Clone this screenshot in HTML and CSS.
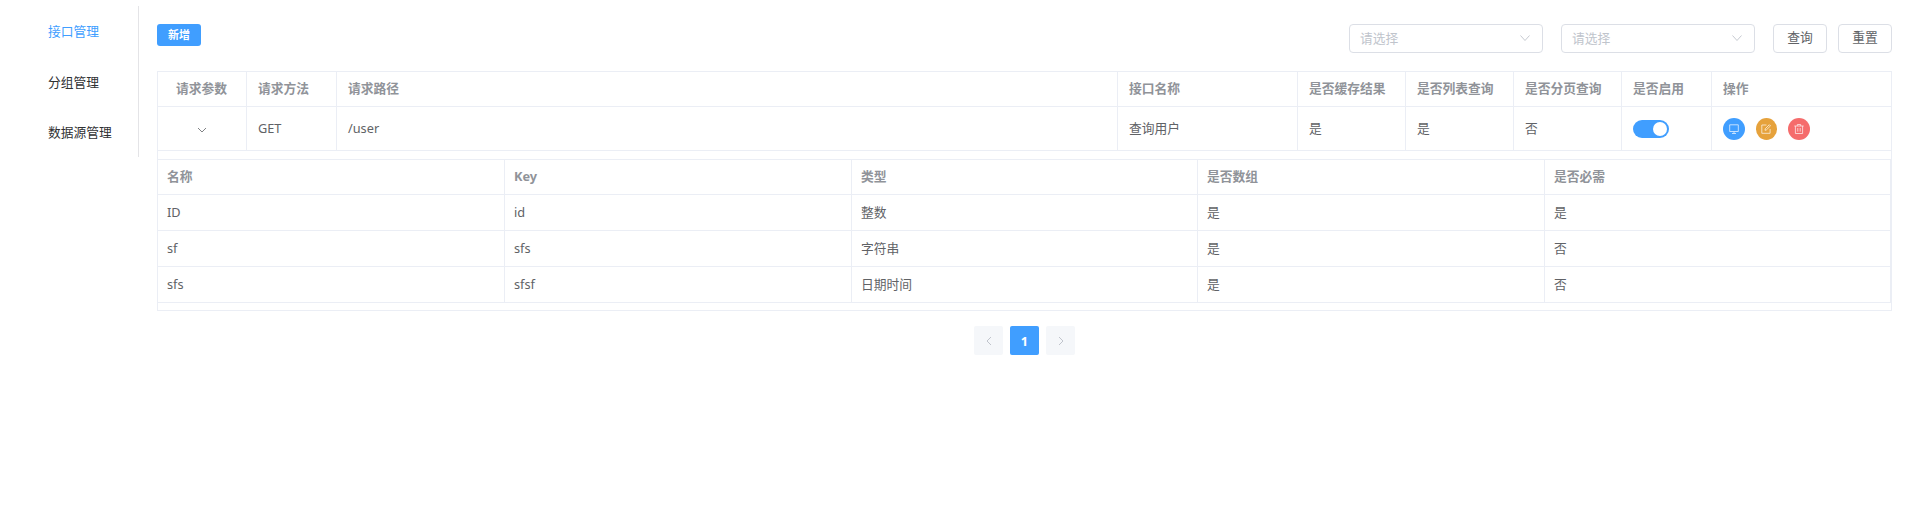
FILE: index.html
```html
<!DOCTYPE html>
<html lang="zh-CN">
<head>
<meta charset="utf-8">
<title>接口管理</title>
<link rel="stylesheet" href="styles.css">
</head>
<body>
<div class="app">
  <nav class="sidebar">
    <a class="nav-item active">接口管理</a>
    <a class="nav-item">分组管理</a>
    <a class="nav-item">数据源管理</a>
  </nav>
  <main class="main">
    <div class="toolbar">
      <button class="btn-add">新增</button>
      <div class="filters">
        <div class="select"><span>请选择</span><svg class="arrow" viewBox="0 0 12 12"><path d="M1.500 3.500 6 8.500l4.500-5"/></svg></div>
        <div class="select"><span>请选择</span><svg class="arrow" viewBox="0 0 12 12"><path d="M1.500 3.500 6 8.500l4.500-5"/></svg></div>
        <button class="btn">查询</button>
        <button class="btn">重置</button>
      </div>
    </div>
    <div class="table">
      <div class="row head">
        <div class="cell center">请求参数</div><div class="cell">请求方法</div><div class="cell">请求路径</div><div class="cell">接口名称</div><div class="cell">是否缓存结果</div><div class="cell">是否列表查询</div><div class="cell">是否分页查询</div><div class="cell">是否启用</div><div class="cell">操作</div>
      </div>
      <div class="row body">
        <div class="cell center"><svg class="expand" viewBox="0 0 10 10"><path d="M1 3l4 4 4-4"/></svg></div><div class="cell">GET</div><div class="cell">/user</div><div class="cell">查询用户</div><div class="cell">是</div><div class="cell">是</div><div class="cell">否</div>
        <div class="cell"><span class="switch"><i class="knob"></i></span></div>
        <div class="cell ops">
          <span class="op blue"><svg viewBox="0 0 10 10"><path d="M.7.800h8.600v6.700H.7zM5 7.500v1.700M3 9.500h4"/></svg></span>
          <span class="op orange"><svg viewBox="0 0 10 10"><path d="M5.500 1H.8v8.300h8.300V5M4 6.300l.2-1.500L8.300.7l1.200 1.200-4.100 4z"/></svg></span>
          <span class="op red"><svg viewBox="0 0 10 10"><path d="M.3 2h9.400M3.300 1.900V.5h3.400v1.400M1.400 2v7.500h7.200V2M3.800 4v3.600M6.200 4v3.600"/></svg></span>
        </div>
      </div>
      <div class="detail">
        <div class="subrow head"><div class="cell">名称</div><div class="cell latin">Key</div><div class="cell">类型</div><div class="cell">是否数组</div><div class="cell">是否必需</div></div>
        <div class="subrow"><div class="cell">ID</div><div class="cell">id</div><div class="cell">整数</div><div class="cell">是</div><div class="cell">是</div></div>
        <div class="subrow"><div class="cell">sf</div><div class="cell">sfs</div><div class="cell">字符串</div><div class="cell">是</div><div class="cell">否</div></div>
        <div class="subrow"><div class="cell">sfs</div><div class="cell">sfsf</div><div class="cell">日期时间</div><div class="cell">是</div><div class="cell">否</div></div>
      </div>
    </div>
    <div class="pager">
      <span class="page"><svg viewBox="0 0 10 10"><path d="M7 1 3 5l4 4"/></svg></span>
      <span class="page current">1</span>
      <span class="page"><svg viewBox="0 0 10 10"><path d="M3 1l4 4-4 4"/></svg></span>
    </div>
  </main>
</div>
</body>
</html>
```
FILE: styles.css
```css
* { box-sizing: border-box; }
body { margin: 0; background: #fff; color: #606266; font: 12.75px/18px "Noto Sans", "Noto Sans CJK SC", sans-serif; }
svg { display: block; fill: none; stroke: currentColor; }
button { font-family: inherit; padding: 0; }
.app { display: flex; align-items: flex-start; padding: 6px 24px 0 0; }
.sidebar { width: 139px; height: 151px; padding-left: 48px; border-right: 1px solid #e4e4e7; }
.nav-item { display: block; height: 50.5px; line-height: 50px; color: #303133; }
.nav-item.active { color: #409eff; }
.main { flex: 1; min-width: 0; padding: 18px 0 0 18px; }
.toolbar { display: flex; justify-content: space-between; align-items: flex-start; height: 47px; }
.btn-add { width: 44px; height: 22px; border: 0; border-radius: 3px; background: #409eff; color: #fff; font-size: 11px; font-weight: 700; line-height: 22px; }
.filters { display: flex; }
.select { display: flex; align-items: center; justify-content: space-between; width: 194px; height: 29px; margin-right: 18px; padding: 0 11px 1px 10px; border: 1px solid #dcdfe6; border-radius: 4px; color: #c0c4cc; }
.arrow { width: 12px; height: 12px; stroke-width: .9; }
.btn { width: 54px; height: 29px; border: 1px solid #dcdfe6; border-radius: 4px; background: #fff; color: #606266; font-size: 12.75px; line-height: 18px; padding-bottom: 3px; font-weight: 400; }
.btn + .btn { margin-left: 11px; }
.table { border: 1px solid #ebeef5; }
.row { display: grid; grid-template-columns: 89px 90px 1fr 180px 108px 108px 108px 90px 179px; border-bottom: 1px solid #ebeef5; }
.row.head { height: 35px; }
.row.body { height: 44px; }
.cell { display: flex; align-items: center; padding: 0 11px 2px; border-right: 1px solid #ebeef5; }
.row .cell:last-child { border-right: 0; }
.head .cell { padding-bottom: 3px; color: #909399; font-weight: 600; }
.head .cell.latin { font-weight: 700; }
.cell.center { justify-content: center; padding: 0 1px 0 0; }
.head .cell.center { padding-bottom: 3px; }
.expand { width: 10px; height: 10px; margin-top: 2px; stroke-width: .8; }
.switch { display: flex; justify-content: flex-end; width: 36px; height: 18px; padding: 2px; margin-top: 3px; border-radius: 9px; background: #409eff; }
.knob { width: 14px; height: 14px; border-radius: 50%; background: #fff; }
.cell.ops { gap: 10.7px; padding-top: 1px; padding-bottom: 0; }
.op { display: flex; align-items: center; justify-content: center; width: 22px; height: 22px; border-radius: 50%; color: #fff; }
.op svg { width: 10px; height: 10px; stroke-width: .8; opacity: .85; }
.blue { background: #409eff; }
.orange { width: 21.400px; background: #e6a23c; }
.red { background: #f56c6c; }
.detail { padding: 8px 0 7px; }
.subrow { display: grid; grid-template-columns: 347px 347px 346px 347px 346px; height: 36px; border-bottom: 1px solid #ebeef5; }
.subrow.head { border-top: 1px solid #ebeef5; }
.subrow .cell { padding-left: 9px; padding-right: 9px; }
.pager { display: flex; justify-content: center; gap: 7px; padding-top: 15px; }
.page { display: flex; align-items: center; justify-content: center; width: 29px; height: 29px; border-radius: 2px; background: #f5f7fa; color: #c0c4cc; }
.page svg { width: 10px; height: 10px; }
.page.current { background: #409eff; color: #fff; font-weight: 700; }
```
